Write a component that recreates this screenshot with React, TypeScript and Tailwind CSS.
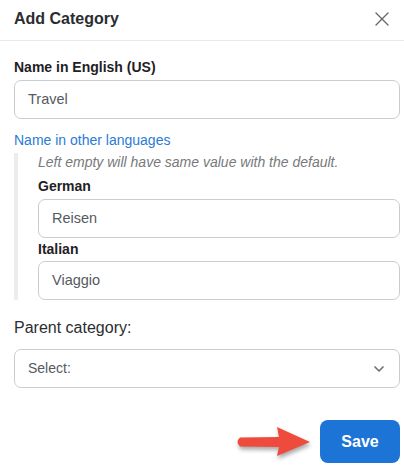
import { X, ChevronDown } from 'lucide-react'

const font = { fontFamily: 'Helvetica, "Liberation Sans", Arial, sans-serif' }

function Field({ value }: { value: string }) {
  return (
    <div className="h-[39px] rounded-[7px] border border-[#c9cdd2] bg-white flex items-center px-[13px] text-[14.5px] text-[#555a60]">
      {value}
    </div>
  )
}

function Arrow() {
  return (
    <svg width="80" height="34" viewBox="0 0 80 34" className="drop-shadow-[1px_3px_2px_rgba(0,0,0,0.35)]">
      <path
        d="M5 12.5 L44 12 L42 2 L75 17 L42 31 L44 22 L5 21.5 Q0 17 5 12.5 Z"
        fill="#ef4b3c"
      />
    </svg>
  )
}

export default function App() {
  return (
    <div className="w-[404px] h-[470px] bg-white text-[#222] overflow-hidden" style={font}>
      {/* Header */}
      <div className="h-[41px] flex items-center justify-between pl-[14px] pr-[10px] border-b border-[#e8e9eb]">
        <h1 className="text-[16px] font-bold text-[#2b2d30] -mt-[3px]">Add Category</h1>
        <X size={24} strokeWidth={1.3} className="text-[#666] -mt-[3px]" />
      </div>

      <div className="pl-[14px] pr-[4px]">
        <div className="text-[14px] font-bold text-[#1f2124] leading-[18px] mt-[17px] mb-[4px]">Name in English (US)</div>
        <Field value="Travel" />

        <div className="text-[14px] text-[#2a7bd6] leading-[18px] mt-[12px] mb-[4px]">Name in other languages</div>
        <div className="flex">
          <div className="w-[4px] bg-[#ececed] shrink-0" />
          <div className="flex-1 pl-[20px]">
            <div className="text-[14px] italic text-[#77797c] leading-[18px]">Left empty will have same value with the default.</div>
            <div className="text-[14px] font-bold text-[#1f2124] leading-[18px] mt-[6px] mb-[4px]">German</div>
            <Field value="Reisen" />
            <div className="text-[14px] font-bold text-[#1f2124] leading-[18px] mt-[2px] mb-[3px]">Italian</div>
            <Field value="Viaggio" />
          </div>
        </div>

        <div className="text-[16px] text-[#2b2d30] leading-[22px] mt-[17px]">Parent category:</div>
        <div className="mt-[10px] h-[39px] rounded-[7px] border border-[#c9cdd2] flex items-center justify-between px-[13px] text-[14px] text-[#555a60]">
          <span>Select:</span>
          <ChevronDown size={16} strokeWidth={2.5} className="text-[#6b7076] -mr-[1px]" />
        </div>

        <div className="flex items-center justify-end gap-[5px] mt-[32px]">
          <Arrow />
          <button className="w-[80px] h-[43px] rounded-[8px] bg-[#1b74d6] text-white text-[16px] font-bold">
            Save
          </button>
        </div>
      </div>
    </div>
  )
}
